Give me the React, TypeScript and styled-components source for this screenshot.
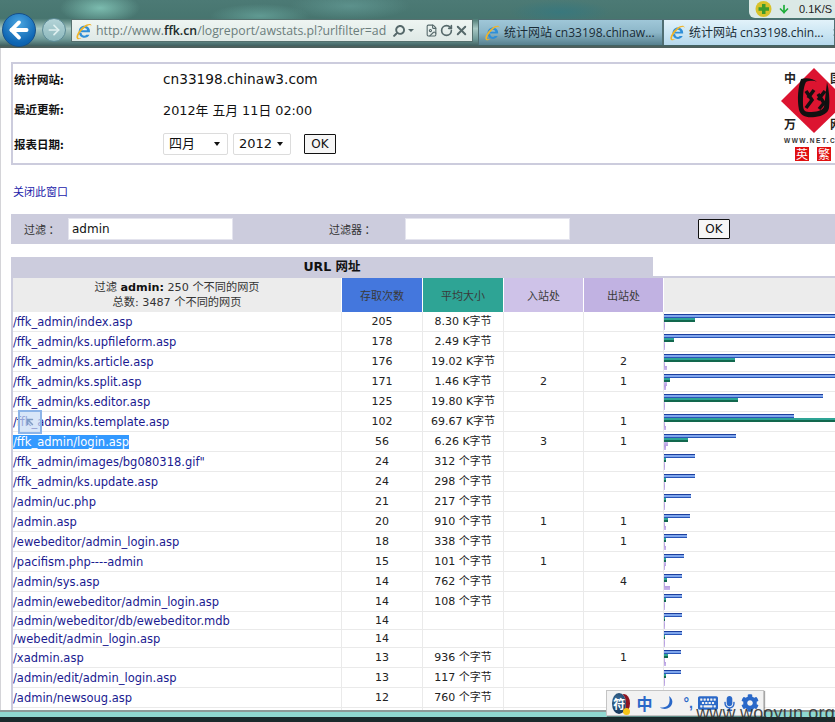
import React from "react";
import styled, { createGlobalStyle } from "styled-components";
import { FaKeyboard, FaMicrophone, FaCog, FaSearch } from "react-icons/fa";
import { RotateCw, X, FileImage, ArrowLeft, ArrowRight, ArrowDown } from "lucide-react";

const Global = createGlobalStyle`
  html, body { margin: 0; padding: 0; background: #fff; }
  #root { width: 835px; height: 722px; overflow: hidden; }
`;

const VERDANA = `"DejaVu Sans", Verdana, "Noto Sans CJK SC", sans-serif`;
const UI = `"Open Sans", "Noto Sans CJK SC", sans-serif`;

const Page = styled.div`
  position: relative;
  width: 835px;
  height: 722px;
  display: flex;
  flex-direction: column;
  overflow: hidden;
  font-family: ${VERDANA};
  color: #111;
`;

const Chrome = styled.header`
  flex: none;
  height: 48px;
  box-sizing: border-box;
  display: flex;
  align-items: flex-start;
  padding: 19px 0 0 2px;
  border-bottom: 2px solid #4d5f5c;
  background:
    radial-gradient(ellipse 40px 16px at 100px 8px, rgba(140,210,195,.75), transparent),
    radial-gradient(ellipse 50px 12px at 260px 16px, rgba(120,190,180,.5), transparent),
    radial-gradient(ellipse 50px 12px at 560px 12px, rgba(50,120,130,.7), transparent),
    radial-gradient(ellipse 60px 14px at 350px 6px, rgba(110,170,165,.5), transparent),
    linear-gradient(180deg, #4c7a75 0%, #47756f 40%, #a8c8c4 62%, #6f9a98 85%, #3f5f5f 100%);
`;

const BackButton = styled.div`
  width: 34px;
  height: 34px;
  margin-top: -6px;
  border-radius: 50%;
  border: 1px solid #16508a;
  box-sizing: border-box;
  background: radial-gradient(circle at 50% 30%, #4ba6e0, #0e66b4 70%, #0a5ca4);
  display: flex;
  align-items: center;
  justify-content: center;
  color: #fff;
`;

const ForwardButton = styled.div`
  width: 24px;
  height: 24px;
  margin: -1px 5px 0 6px;
  border-radius: 50%;
  border: 1px solid #5c8a96;
  box-sizing: border-box;
  background: linear-gradient(180deg, #b4d4d8, #8cb8bc);
  display: flex;
  align-items: center;
  justify-content: center;
  color: #dff0f0;
`;

const AddressBar = styled.div`
  width: 402px;
  height: 23px;
  box-sizing: border-box;
  display: flex;
  align-items: center;
  padding: 0 3px 0 3px;
  border: 1px solid #55706e;
  background: linear-gradient(180deg, #eef5f2, #dfe9e6);
`;

const Url = styled.div`
  margin-left: 3px;
  width: 296px;
  white-space: nowrap;
  overflow: hidden;
  font: 12.3px/20px ${UI};
  color: #6b7d7c;
  b { font-weight: 600; color: #1b2b2b; }
`;

const AddressTools = styled.div`
  display: flex;
  align-items: center;
  margin-left: 3px;
  color: #55686a;
`;

const Caret = styled.span`
  width: 0;
  height: 0;
  margin: 0 10px 0 3px;
  border: 3px solid transparent;
  border-top-color: #55686a;
  border-bottom: 0;
`;

const ToolIcon = styled.span`
  width: 15px;
  display: flex;
  justify-content: center;
`;

const Tab = styled.div<{ $active?: boolean; $w: number }>`
  width: ${(p) => p.$w}px;
  height: 26px;
  box-sizing: border-box;
  flex: none;
  display: flex;
  align-items: center;
  gap: 3px;
  padding-left: 5px;
  margin-left: ${(p) => (p.$active ? 0 : 5)}px;
  border: 1px solid #4f6e72;
  border-bottom: 0;
  font: 12px/20px ${UI};
  color: #1a2c36;
  white-space: nowrap;
  overflow: hidden;
  background: ${(p) =>
    p.$active
      ? "linear-gradient(180deg, #e2f2fa 0%, #c8e4f2 60%, #b6d8ec 100%)"
      : "linear-gradient(180deg, #9fc7d8 0%, #8cb6c8 50%, #56808e 100%)"};
`;

const TabClose = styled.span`
  margin-left: 4px;
  color: #9bb4c0;
  display: flex;
`;

const Tray = styled.div`
  position: absolute;
  right: 0;
  top: 0;
  width: 86px;
  height: 18px;
  box-sizing: border-box;
  display: flex;
  align-items: center;
  padding-left: 5px;
  gap: 5px;
  border-radius: 0 0 0 6px;
  background: #dbe9e6;
  font: 11px/18px "Liberation Sans", sans-serif;
  color: #222;
`;

const Main = styled.main`
  flex: 1;
  min-height: 0;
  overflow: hidden;
  box-sizing: border-box;
  padding: 14px 0 0 10px;
  border-left: 1px solid #d4d4d8;
`;

const Inner = styled.div`
  width: 870px;
`;

const InfoPanel = styled.section`
  height: 103px;
  box-sizing: border-box;
  border: 2px solid #ccccdd;
  display: flex;
  justify-content: space-between;
  padding-right: 28px;
`;

const InfoGrid = styled.div`
  display: grid;
  grid-template-columns: 149px auto;
  grid-template-rows: 30px 30px 39px;
  padding-left: 1px;
  align-items: center;
  align-self: flex-start;
`;

const InfoLabel = styled.div`
  font: bold 11.5px/14px "Noto Sans CJK SC", sans-serif;
  color: #111;
`;

const SiteName = styled.div`
  font-size: 13.7px;
  color: #111;
`;

const UpdateValue = styled.div`
  font-size: 12.8px;
  color: #111;
`;

const DateControls = styled.form`
  display: flex;
  align-items: center;
  margin: 0;
`;

const SelectBox = styled.div<{ $w: number }>`
  position: relative;
  width: ${(p) => p.$w}px;
  height: 22px;
  margin-right: 5px;
  &::after {
    content: "";
    position: absolute;
    right: 8px;
    top: 9px;
    border: 3.5px solid transparent;
    border-top: 4px solid #111;
    border-bottom: 0;
    pointer-events: none;
  }
`;

const Select = styled.select`
  appearance: none;
  width: 100%;
  height: 100%;
  box-sizing: border-box;
  padding: 0 0 0 5px;
  border: 1px solid #dcdcdc;
  border-radius: 2px;
  background: #fff;
  font: 13px ${VERDANA};
  color: #111;
`;

const OkButton = styled.button<{ $ml?: number }>`
  width: 32px;
  height: 20px;
  margin-left: ${(p) => p.$ml ?? 0}px;
  padding: 0;
  box-sizing: border-box;
  border: 1px solid #111;
  border-radius: 1px;
  background: #f6f6f6;
  font: 12px/18px ${VERDANA};
  color: #111;
`;

const Logo = styled.svg`
  flex: none;
  margin-top: 1px;
`;

const CloseLink = styled.a`
  display: block;
  margin: 19px 0 16px 2px;
  font: 11px/14px "Noto Sans CJK SC", sans-serif;
  color: #2222aa;
`;

const FilterBar = styled.section`
  height: 30px;
  box-sizing: border-box;
  display: flex;
  align-items: center;
  padding-left: 13px;
  background: #ccccdd;
  margin-bottom: 13px;
`;

const FilterLabel = styled.label<{ $w: number; $ml?: number }>`
  width: ${(p) => p.$w}px;
  margin-left: ${(p) => p.$ml ?? 0}px;
  flex: none;
  font: 11px/14px "Noto Sans CJK SC", sans-serif;
  color: #333;
`;

const FilterInput = styled.input`
  width: 165px;
  height: 22px;
  box-sizing: border-box;
  padding: 0 0 0 3px;
  border: 1px solid #e4e4ee;
  background: #fff;
  font: 12px ${VERDANA};
  color: #111;
  outline: none;
`;

const TableTitle = styled.h2`
  width: 642px;
  height: 19px;
  margin: 0;
  background: #ccccdd;
  text-align: center;
  font: bold 12.5px/20px ${VERDANA};
  color: #111;
`;

const Frame = styled.div`
  border-top: 2px solid #ccccdd;
  border-left: 2px solid #ccccdd;
`;

const Table = styled.table`
  width: 1000px;
  table-layout: fixed;
  border-collapse: separate;
  border-spacing: 0;
`;

const HeadCell = styled.th<{ $bg: string }>`
  height: 34px;
  box-sizing: border-box;
  padding: 0;
  border-right: 1px solid #fff;
  background: ${(p) => p.$bg};
  font: normal 11px/14px "Noto Sans CJK SC", sans-serif;
  color: #3a3a3a;
  text-align: center;
  vertical-align: middle;
`;

const SummaryLine = styled.div`
  font: 11.2px/15px ${VERDANA};
  color: #333;
  b { font-weight: bold; color: #111; }
`;

const Row = styled.tr<{ $short?: boolean }>`
  height: ${(p) => (p.$short ? 18 : 20)}px;
`;

const Cell = styled.td`
  box-sizing: border-box;
  padding: 1px 0 0;
  border-right: 1px solid #eaeaea;
  border-bottom: 1px solid #eaeaea;
  text-align: center;
  font-size: 11px;
  line-height: 16px;
  color: #222;
  white-space: nowrap;
  overflow: hidden;
`;

const UrlCell = styled(Cell)`
  text-align: left;
  font-size: 11.5px;
`;

const UrlLink = styled.a<{ $selected?: boolean }>`
  color: ${(p) => (p.$selected ? "#fff" : "#1a1a90")};
  background: ${(p) => (p.$selected ? "#3399ff" : "transparent")};
`;

const SizeText = styled.span`
  font-size: 11px;
`;

const BarCell = styled.td<{ $short?: boolean }>`
  box-sizing: border-box;
  padding: ${(p) => (p.$short ? 1 : 2)}px 0 0 0;
  border-bottom: 1px solid #eaeaea;
  vertical-align: top;
  overflow: hidden;
`;

const BAR_BG: Record<string, string> = {
  hits: "linear-gradient(180deg,#1d3f9e 0 25%,#7fa6ec 25% 75%,#2a56b8 75%)",
  size: "linear-gradient(180deg,#2ea495 0 50%,#12684e 50%)",
  entry: "linear-gradient(180deg,#cbb8ee,#b79fe0)",
  exit: "linear-gradient(180deg,#b79fe0,#cbb8ee)",
};

const Bar = styled.div<{ $kind: string }>`
  height: 4px;
  background: ${(p) => BAR_BG[p.$kind]};
`;

const BottomBar = styled.footer`
  flex: none;
  height: 12px;
  box-sizing: border-box;
  border-top: 2px solid #8d9a98;
  background: linear-gradient(180deg, #8fd8d0 0 50%, #1a2a2c 50%);
`;

const Ime = styled.div`
  position: absolute;
  left: 606px;
  top: 690px;
  width: 158px;
  height: 26px;
  box-sizing: border-box;
  display: flex;
  align-items: center;
  padding-left: 5px;
  border: 1px solid #c4c4c4;
  background: #f2f2f2;
  box-shadow: 1px 1px 1px rgba(0, 0, 0, .35);
  color: #2a68c8;
`;

const ImeBall = styled.div`
  position: relative;
  width: 21px;
  height: 21px;
  border-radius: 50%;
  background: radial-gradient(circle at 40% 35%, #3d6f9a, #0e2c4e);
  box-shadow: 5px 0 0 -1px #8f1420;
  color: #fff;
  font: bold 12px/21px "Noto Sans CJK SC", sans-serif;
  text-align: center;
  margin-right: 10px;
  &::after {
    content: "";
    position: absolute;
    right: -4px;
    bottom: -1px;
    width: 7px;
    height: 7px;
    border-radius: 50%;
    background: #f5c518;
  }
`;

const ImeChar = styled.span`
  font: bold 16px/20px "Noto Sans CJK SC", sans-serif;
  margin-right: 6px;
`;

const ImeDot = styled.span`
  font: bold 14px/14px "Liberation Sans", sans-serif;
  margin: 0 5px 0 9px;
`;

const ImeSlot = styled.span`
  display: flex;
  margin-right: 4px;
`;

const Watermark = styled.div`
  position: absolute;
  right: 0;
  bottom: -3px;
  font: 18px/24px "Liberation Sans", sans-serif;
  letter-spacing: .2px;
  color: rgba(40, 40, 40, .85);
  white-space: nowrap;
`;

const DragIcon = styled.div`
  position: absolute;
  left: 18px;
  top: 410px;
  width: 24px;
  height: 24px;
  box-sizing: border-box;
  border: 2px solid #8cb4e8;
  background: rgba(200, 220, 245, .7);
  display: flex;
  align-items: center;
  justify-content: center;
  color: #7f9cc4;
`;

const IeIcon = ({ size = 16 }: { size?: number }) => (
  <svg width={size} height={size} viewBox="0 0 24 24" style={{ flex: "none" }}>
    <path d="M5 13.5h15c.4-5-3-8.5-7.5-8.5C8 5 5 8.5 5 13c0 5 3.5 8 7.5 8 3.2 0 5.6-1.6 6.8-4h-4.2c-.7.8-1.6 1.2-2.6 1.2-2 0-3.6-1.4-3.7-3.7zM8.9 11c.3-1.9 1.8-3 3.6-3s3.3 1.1 3.5 3z" fill="#2f8fd8" fillRule="evenodd" />
    <path d="M21 3c-4-2-12 3-17 11-2 3.500-3 7-1 8.500 1.500 1 4 0 6-1.500-2 .7-3.800 1-4.500.2-1-1.200.2-4 2.500-7.200C11 9 16 4 20 4c1 0 1.500.5 1 2 1-1 1-2.300 0-3z" fill="#f0b429" />
  </svg>
);

const Crescent = () => (
  <svg width="16" height="16" viewBox="0 0 16 16" style={{ flex: "none" }}>
    <path d="M10 1c3 2 4 5 3 8-1.200 3.800-5.500 6-10 4.500-1-.3-1.600-.8-2-1.300 3 .8 6.500 0 8.300-2.400C10.800 7.500 11 4 10 1z" fill="currentColor" />
  </svg>
);

const LogoMark = () => (
  <Logo width="70" height="98" viewBox="0 0 70 98">
    <polygon points="33,3 66,36 33,68 0,36" fill="#dc1430" />
    <path d="M20 14c-3 8-4 20-2 31 2 6 7 8 16 7 8-1 13-4 14-9 1-8 0-18-2-26-1 8-2 18-3 25-2 4-8 5-15 5-5 0-6-3-6-8 0-8 0-16 3-22 5-2 9-1 11 0-3-3-10-5-16-3z" fill="#111" />
    <path d="M25 26l6 9-6 8M33 25l-6 8M37 29l6 9-5 6M44 26l-7 9" stroke="#111" strokeWidth="3.500" fill="none" />
    <g fontFamily="'Noto Sans CJK SC', sans-serif" fontWeight="bold" fontSize="12" fill="#222">
      <text x="3" y="18">中</text>
      <text x="49" y="18">国</text>
      <text x="3" y="64">万</text>
      <text x="49" y="64">网</text>
    </g>
    <text x="3" y="78" fontFamily="'Liberation Sans', sans-serif" fontWeight="bold" fontSize="6.500" letterSpacing="1.500" fill="#333">WWW.NET.CN</text>
    <rect x="14" y="82" width="14" height="14" fill="#e01010" />
    <rect x="36" y="82" width="14" height="14" fill="#e01010" />
    <g fontFamily="'Noto Sans CJK SC', sans-serif" fontSize="12" fill="#fff">
      <text x="15" y="94">英</text>
      <text x="37" y="94">繁</text>
    </g>
  </Logo>
);

type R = {
  url: string; hits: number; size: string; entry?: number; exit?: number;
  bars: [number, number, number, number]; short?: boolean; selected?: boolean;
};

const rows: R[] = [
  { url: "/ffk_admin/index.asp", hits: 205, size: "8.30 K字节", bars: [999, 31, 1, 1] },
  { url: "/ffk_admin/ks.upfileform.asp", hits: 178, size: "2.49 K字节", bars: [999, 10, 1, 1] },
  { url: "/ffk_admin/ks.article.asp", hits: 176, size: "19.02 K字节", exit: 2, bars: [999, 71, 1, 3] },
  { url: "/ffk_admin/ks.split.asp", hits: 171, size: "1.46 K字节", entry: 2, exit: 1, bars: [999, 6, 3, 2] },
  { url: "/ffk_admin/ks.editor.asp", hits: 125, size: "19.80 K字节", bars: [159, 74, 1, 1] },
  { url: "/ffk_admin/ks.template.asp", hits: 102, size: "69.67 K字节", exit: 1, bars: [130, 999, 1, 2] },
  { url: "/ffk_admin/login.asp", hits: 56, size: "6.26 K字节", entry: 3, exit: 1, bars: [72, 24, 4, 2], selected: true },
  { url: "/ffk_admin/images/bg080318.gif\"", hits: 24, size: "312 个字节", bars: [31, 2, 1, 1] },
  { url: "/ffk_admin/ks.update.asp", hits: 24, size: "298 个字节", bars: [31, 2, 1, 1] },
  { url: "/admin/uc.php", hits: 21, size: "217 个字节", bars: [27, 2, 1, 1] },
  { url: "/admin.asp", hits: 20, size: "910 个字节", entry: 1, exit: 1, bars: [26, 4, 1, 2] },
  { url: "/ewebeditor/admin_login.asp", hits: 18, size: "338 个字节", exit: 1, bars: [23, 2, 1, 2] },
  { url: "/pacifism.php----admin", hits: 15, size: "101 个字节", entry: 1, bars: [20, 2, 2, 1] },
  { url: "/admin/sys.asp", hits: 14, size: "762 个字节", exit: 4, bars: [18, 3, 1, 6] },
  { url: "/admin/ewebeditor/admin_login.asp", hits: 14, size: "108 个字节", bars: [18, 2, 1, 1] },
  { url: "/admin/webeditor/db/ewebeditor.mdb", hits: 14, size: "", bars: [18, 1, 1, 1], short: true },
  { url: "/webedit/admin_login.asp", hits: 14, size: "", bars: [18, 1, 1, 1], short: true },
  { url: "/xadmin.asp", hits: 13, size: "936 个字节", exit: 1, bars: [17, 4, 1, 2] },
  { url: "/admin/edit/admin_login.asp", hits: 13, size: "117 个字节", bars: [17, 2, 1, 1] },
  { url: "/admin/newsoug.asp", hits: 12, size: "760 个字节", bars: [17, 2, 1, 1] },
];

const barKinds = ["hits", "size", "entry", "exit"];

export default function App() {
  return (
    <Page>
      <Global />
      <Chrome>
        <BackButton><ArrowLeft size={26} strokeWidth={3.5} /></BackButton>
        <ForwardButton><ArrowRight size={16} strokeWidth={2.5} /></ForwardButton>
        <AddressBar>
          <IeIcon size={18} />
          <Url>http://www.<b>ffk.cn</b>/logreport/awstats.pl?urlfilter=ad</Url>
          <AddressTools>
            <FaSearch size={12} style={{ transform: "scaleX(-1)" }} />
            <Caret />
            <ToolIcon><FileImage size={13} /></ToolIcon>
            <ToolIcon><RotateCw size={13} strokeWidth={3} /></ToolIcon>
            <ToolIcon><X size={15} strokeWidth={3} /></ToolIcon>
          </AddressTools>
        </AddressBar>
        <Tab $w={185}><IeIcon size={17} />统计网站 cn33198.chinaw...</Tab>
        <Tab $active $w={172}><IeIcon size={17} />统计网站 cn33198.chin...<TabClose><X size={11} strokeWidth={3} /></TabClose></Tab>
      </Chrome>
      <Tray>
        <svg width="19" height="16" viewBox="0 0 19 16">
          <circle cx="9.500" cy="8" r="8" fill="#d8c22a" />
          <path d="M8 3h3.500v3.300H15v3.400h-3.500V13H8V9.700H4.500V6.300H8z" fill="#3e9a2c" />
        </svg>
        <ArrowDown size={12} color="#1fae3c" strokeWidth={3.5} />
        <span style={{ marginLeft: 4 }}>0.1K/S</span>
      </Tray>

      <Main>
        <Inner>
          <InfoPanel>
            <InfoGrid>
              <InfoLabel>统计网站:</InfoLabel>
              <SiteName>cn33198.chinaw3.com</SiteName>
              <InfoLabel>最近更新:</InfoLabel>
              <UpdateValue>2012年 五月 11日 02:00</UpdateValue>
              <InfoLabel>报表日期:</InfoLabel>
              <DateControls>
                <SelectBox $w={65}><Select defaultValue="四月"><option>四月</option></Select></SelectBox>
                <SelectBox $w={58}><Select defaultValue="2012"><option>2012</option></Select></SelectBox>
                <OkButton type="button" $ml={8}>OK</OkButton>
              </DateControls>
            </InfoGrid>
            <LogoMark />
          </InfoPanel>

          <CloseLink>关闭此窗口</CloseLink>

          <FilterBar>
            <FilterLabel $w={44}>过滤 ：</FilterLabel>
            <FilterInput defaultValue="admin" readOnly />
            <FilterLabel $w={76} $ml={96}>过滤器 ：</FilterLabel>
            <FilterInput defaultValue="" readOnly />
            <OkButton type="button" $ml={128}>OK</OkButton>
          </FilterBar>

          <TableTitle>URL 网址</TableTitle>
          <Frame>
            <Table>
              <colgroup>
                <col style={{ width: 329 }} />
                <col style={{ width: 81 }} />
                <col style={{ width: 81 }} />
                <col style={{ width: 80 }} />
                <col style={{ width: 80 }} />
                <col />
              </colgroup>
              <thead>
                <tr>
                  <HeadCell $bg="#ececec">
                    <SummaryLine>过滤 <b>admin:</b> 250 个不同的网页</SummaryLine>
                    <SummaryLine>总数: 3487 个不同的网页</SummaryLine>
                  </HeadCell>
                  <HeadCell $bg="#4477dd">存取次数</HeadCell>
                  <HeadCell $bg="#2ea495">平均大小</HeadCell>
                  <HeadCell $bg="#cec2e8">入站处</HeadCell>
                  <HeadCell $bg="#c1b2e2">出站处</HeadCell>
                  <HeadCell $bg="#ececec" />
                </tr>
              </thead>
              <tbody>
                {rows.map((r) => (
                  <Row key={r.url} $short={r.short}>
                    <UrlCell><UrlLink $selected={r.selected}>{r.url}</UrlLink></UrlCell>
                    <Cell>{r.hits}</Cell>
                    <Cell><SizeText>{r.size}</SizeText></Cell>
                    <Cell>{r.entry}</Cell>
                    <Cell>{r.exit}</Cell>
                    <BarCell $short={r.short}>
                      {r.bars.map((w, i) => (
                        <Bar key={i} $kind={barKinds[i]} style={{ width: w }} />
                      ))}
                    </BarCell>
                  </Row>
                ))}
                <Row><Cell /><Cell /><Cell /><Cell /><Cell /><BarCell /></Row>
              </tbody>
            </Table>
          </Frame>
        </Inner>
      </Main>
      <BottomBar />

      <DragIcon><ArrowRight size={12} strokeWidth={3} style={{ transform: "rotate(-135deg)" }} /></DragIcon>
      <Ime>
        <ImeBall>符</ImeBall>
        <ImeChar>中</ImeChar>
        <Crescent />
        <ImeDot>°,</ImeDot>
        <ImeSlot><FaKeyboard size={20} /></ImeSlot>
        <ImeSlot><FaMicrophone size={15} /></ImeSlot>
        <ImeSlot><FaCog size={18} /></ImeSlot>
      </Ime>
      <Watermark>www.wooyun.org</Watermark>
    </Page>
  );
}
